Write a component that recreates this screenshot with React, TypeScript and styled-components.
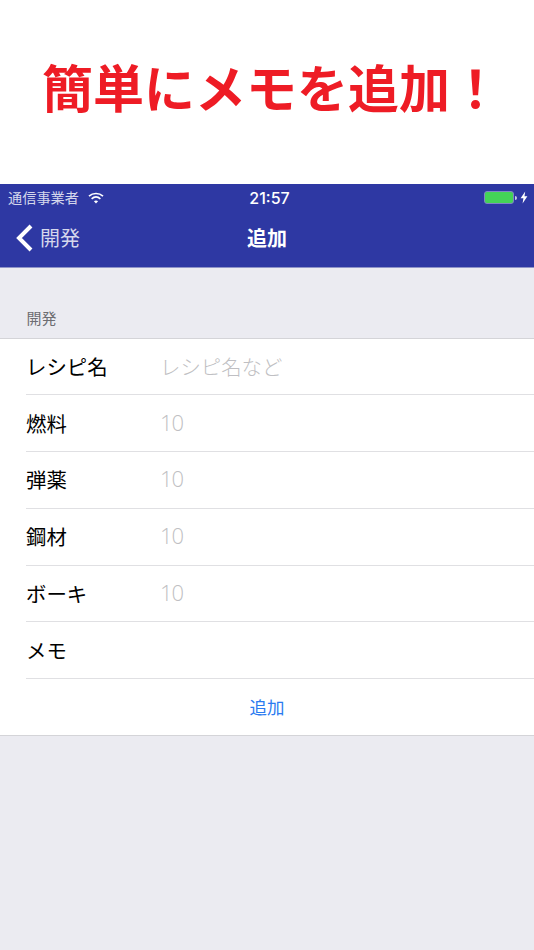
import React from 'react';
import styled, {createGlobalStyle} from 'styled-components';

const GlobalStyle = createGlobalStyle`
  html, body {
    margin: 0;
    padding: 0;
    background: #ebebf1;
  }
  * {
    box-sizing: border-box;
  }
`;

const Page = styled.div`
  width: 534px;
  height: 950px;
  overflow: hidden;
  display: flex;
  flex-direction: column;
  font-family: 'Noto Sans CJK JP', sans-serif;
  background: #ebebf1;
`;

const Banner = styled.div`
  height: 184px;
  flex: none;
  background: #fff;
  display: flex;
  justify-content: center;
  padding: 50px 0 0 9px;
`;

const Headline = styled.h1`
  margin: 0;
  font-size: 51px;
  line-height: 72px;
  font-weight: 700;
  color: #ee1c25;
  white-space: nowrap;
`;

const Header = styled.div`
  height: 83.5px;
  flex: none;
  background: #2e38a3;
  border-bottom: 1px solid #8f94c8;
  color: #fff;
  display: flex;
  flex-direction: column;
`;

const StatusBar = styled.div`
  height: 27px;
  display: grid;
  grid-template-columns: 1fr auto 1fr;
  align-items: center;
  padding: 0 6px 0 8px;
`;

const StatusLeft = styled.div`
  display: flex;
  align-items: center;
  gap: 9px;
  font-size: 14.2px;
  line-height: 27px;
  color: #d5d7ec;
`;

const Clock = styled.div`
  margin-left: 3px;
  font-family: 'Inter', sans-serif;
  font-size: 16px;
  font-weight: 500;
`;

const StatusRight = styled.div`
  display: flex;
  justify-content: flex-end;
  align-items: center;
  gap: 3px;
`;

const Battery = styled.div`
  width: 30px;
  height: 13px;
  border-radius: 3px;
  border: 1px solid #7f85c4;
  background: #44d357;
`;

const BatteryTip = styled.div`
  width: 2px;
  height: 4px;
  margin-left: -2px;
  border-radius: 0 2px 2px 0;
  background: #c8cbe6;
`;

const NavBar = styled.div`
  flex: 1;
  display: grid;
  grid-template-columns: 1fr auto 1fr;
  align-items: center;
  padding: 0 0 2px 0;
`;

const BackLink = styled.div`
  display: flex;
  align-items: center;
  gap: 7px;
  padding-left: 16px;
  font-size: 20px;
  color: #d5d7ec;
`;

const NavTitle = styled.div`
  font-size: 20px;
  font-weight: 700;
`;

const SectionLabel = styled.div`
  height: 70px;
  flex: none;
  display: flex;
  align-items: flex-end;
  padding: 0 0 10px 26.5px;
  font-size: 15px;
  line-height: 20px;
  color: #6d6d72;
`;

const Form = styled.div`
  background: #fff;
  border-top: 1px solid #d4d4d8;
  border-bottom: 1px solid #d4d4d8;
`;

const Row = styled.div`
  height: 56.8px;
  margin-left: 26px;
  display: flex;
  align-items: center;
  padding-bottom: 1px;
  border-bottom: 1px solid #e0e0e3;
`;

const RowLabel = styled.div`
  width: 134px;
  font-size: 20.4px;
  color: #000;
`;

const RowValue = styled.div<{$digits?: boolean}>`
  margin-top: ${(props) => (props.$digits ? '-2px' : '0')};
  font-family: ${(props) =>
    props.$digits ? "'Open Sans', sans-serif" : "'Noto Sans CJK JP', sans-serif"};
  font-size: ${(props) => (props.$digits ? '22px' : '20.4px')};
  letter-spacing: ${(props) => (props.$digits ? '-1px' : '0')};
  font-weight: 300;
  color: #bfbfc3;
`;

const AddRow = styled.div`
  height: 56px;
  display: flex;
  align-items: center;
  justify-content: center;
  padding-bottom: 2px;
  font-size: 17.5px;
  color: #2b7bf0;
`;

const WifiIcon = () => (
  <svg width="16" height="12" viewBox="0 0 16 12" fill="none" stroke="#fff" strokeWidth="1.7">
    <path d="M1 4.2C5 .6 11 .6 15 4.2" />
    <path d="M3.6 6.8c2.6-2.2 6.2-2.2 8.8 0" />
    <path d="M8 11.6 5.9 9.2c1.2-1 3-1 4.2 0z" fill="#fff" stroke="none" />
  </svg>
);

const BoltIcon = () => (
  <svg width="8" height="13" viewBox="0 0 8 12" fill="#fff">
    <path d="M5.2 0 .6 6.8h2.8L2.6 12l4.8-7.2H4.5z" />
  </svg>
);

const ChevronIcon = () => (
  <svg width="17" height="28" viewBox="0 0 17 28" fill="none" stroke="#fff" strokeWidth="4">
    <path d="M15 2 3 14l12 12" />
  </svg>
);

const fields = [
  {label: '燃料', value: '10'},
  {label: '弾薬', value: '10'},
  {label: '鋼材', value: '10'},
  {label: 'ボーキ', value: '10'},
];

const App = () => {
  return (
    <Page>
      <GlobalStyle />
      <Banner>
        <Headline>簡単にメモを追加！</Headline>
      </Banner>
      <Header>
        <StatusBar>
          <StatusLeft>
            <span>通信事業者</span>
            <WifiIcon />
          </StatusLeft>
          <Clock>21:57</Clock>
          <StatusRight>
            <Battery />
            <BatteryTip />
            <BoltIcon />
          </StatusRight>
        </StatusBar>
        <NavBar>
          <BackLink>
            <ChevronIcon />
            <span>開発</span>
          </BackLink>
          <NavTitle>追加</NavTitle>
        </NavBar>
      </Header>
      <SectionLabel>開発</SectionLabel>
      <Form>
        <Row>
          <RowLabel>レシピ名</RowLabel>
          <RowValue>レシピ名など</RowValue>
        </Row>
        {fields.map((field) => (
          <Row key={field.label}>
            <RowLabel>{field.label}</RowLabel>
            <RowValue $digits>{field.value}</RowValue>
          </Row>
        ))}
        <Row>
          <RowLabel>メモ</RowLabel>
        </Row>
        <AddRow>追加</AddRow>
      </Form>
    </Page>
  );
};

export default App;
